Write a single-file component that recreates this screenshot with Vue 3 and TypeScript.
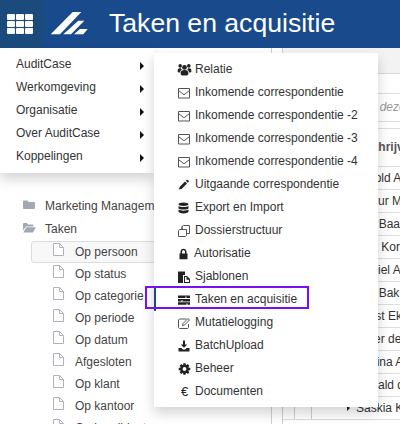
<script setup lang="ts">
interface Icon { fill?: string; stroke?: string; soft?: boolean }

const circle = (cx: number, cy: number, r: number): string =>
  `M${cx - r} ${cy}a${r} ${r} 0 1 0 ${2 * r} 0a${r} ${r} 0 1 0 ${-2 * r} 0Z`

function gear(): string {
  const pts: string[] = []
  const teeth = 8
  for (let i = 0; i < teeth; i++) {
    const a = (i / teeth) * Math.PI * 2
    for (const [off, r] of [[-0.3, 4.4], [-0.2, 5.9], [0.2, 5.9], [0.3, 4.4]] as const) {
      const t = a + off
      pts.push(`${(7.5 + Math.cos(t) * r).toFixed(2)} ${(7 + Math.sin(t) * r).toFixed(2)}`)
    }
  }
  return `M${pts.join('L')}Z${circle(7.5, 7, 1.9)}`
}

const envelope: Icon = { stroke: 'M1.5 2.5h11v9.5h-11zM1.5 4.5L7 8.8L12.5 4.5', soft: true }

const mainItems = ['AuditCase', 'Werkomgeving', 'Organisatie', 'Over AuditCase', 'Koppelingen']

const subItems: { label: string; icon: Icon; euro?: boolean; active?: boolean; tight?: boolean }[] = [
  { label: 'Relatie', icon: { fill: `${circle(7.5, 4.4, 2.4)}${circle(3.2, 2.9, 1.8)}${circle(11.8, 2.9, 1.8)}M3.6 10.6C3.6 8 4.8 7 7.5 7S11.4 8 11.4 10.6C11.4 11.8 10.6 12.6 9.6 12.6H5.4C4.4 12.6 3.6 11.8 3.6 10.6ZM.6 8C.6 5.6 1.6 5 3.8 5.2C4 5.9 4.4 6.4 4.9 6.7C3.8 7.3 3.1 8.2 3 9.4H1.6C1 9.4.6 8.8.6 8ZM14.4 8C14.4 5.6 13.4 5 11.2 5.2C11 5.9 10.6 6.4 10.1 6.7C11.2 7.3 11.9 8.2 12 9.4H13.4C14 9.4 14.4 8.8 14.4 8Z` } },
  { label: 'Inkomende correspondentie', icon: envelope },
  { label: 'Inkomende correspondentie -2', icon: envelope },
  { label: 'Inkomende correspondentie -3', icon: envelope },
  { label: 'Inkomende correspondentie -4', icon: envelope },
  { label: 'Uitgaande correspondentie', icon: { fill: 'M2 11.5L2.6 9L8 3.6L10 5.6L4.6 11ZM8.8 2.8L9.6 2C10 1.6 10.4 1.6 10.8 2L11.6 2.8C12 3.2 12 3.6 11.6 4L10.8 4.8Z' } },
  { label: 'Export en Import', icon: { fill: 'M6.5 1.5C9.3 1.5 11.5 2.2 11.5 3.3S9.3 5 6.5 5S1.5 4.4 1.5 3.3S3.7 1.5 6.5 1.5ZM1.5 5C2.5 5.8 4.5 6.1 6.5 6.1S10.5 5.8 11.5 5V6.9C11.5 8 9.3 8.6 6.5 8.6S1.5 8 1.5 6.9ZM1.5 8.6C2.5 9.4 4.5 9.7 6.5 9.7S10.5 9.4 11.5 8.6V10.6C11.5 11.7 9.3 12.4 6.5 12.4S1.5 11.7 1.5 10.6Z' } },
  { label: 'Dossierstructuur', icon: { stroke: 'M5 5.5V2.5L6.5 1.5H12.5V9.5H9.5M5 5.5H2.5L1.5 7V12.5H8.5L9.5 11.5V5.5H5ZM5 2.5V5.5', soft: true } },
  { label: 'Autorisatie', tight: true, icon: { fill: 'M2.5 6.5H3.5V4.8C3.5 2.9 4.8 1.8 6.5 1.8S9.5 2.9 9.5 4.8V6.5H10.5V12.2H2.5ZM5 6.5H8V4.8C8 3.8 7.4 3.2 6.5 3.2S5 3.8 5 4.8Z' } },
  { label: 'Sjablonen', icon: { fill: 'M1 1.5H8V5H6V13H1ZM7 6H10L13 9V13H7ZM8 7V12H12V9.8H9.5V7Z' } },
  { label: 'Taken en acquisitie', active: true, icon: { fill: 'M1 2.5H13V5H9.5V3.6H8.5V5H1ZM1 5.9H13V8.4H5.5V7H4.5V8.4H1ZM1 9.3H13V11.8H10.5V10.4H9.5V11.8H1Z' } },
  { label: 'Mutatielogging', icon: { stroke: 'M9.5 3H2.5L1.5 4V11.5L2.5 12.5H10.5L11.5 11.5V8M5.5 9.5L6 7.5L11 2.5L12.5 4L7.5 9Z', soft: true } },
  { label: 'BatchUpload', icon: { fill: 'M6 1.5H8V5.5H10.2L7 8.8L3.8 5.5H6ZM1.5 9H4.4L5.8 10.4H8.2L9.6 9H12.5V12.5H1.5Z' } },
  { label: 'Beheer', icon: { fill: gear() } },
  { label: 'Documenten', icon: {}, euro: true },
]

const subTree = ['Op persoon', 'Op status', 'Op categorie', 'Op periode', 'Op datum', 'Afgesloten', 'Op klant', 'Op kantoor', 'Op kandidaat']

const people = ['Arnold A', 'Arthur M', 'Jan Baan', 'Bert Kor', 'Daniel A', 'Jan Bak', 'Joost Ek', 'Peter de', 'Marina A', 'Ronald d', 'Saskia K']
</script>

<template>
  <div class="page">
    <header class="topbar">
      <div class="apps">
        <div class="apps-grid"><i v-for="n in 9" :key="n" /></div>
      </div>
      <svg class="logo" width="40" height="24" viewBox="0 0 40 24">
        <path d="M.7 22.3L22.7 0H31.3L10 22.3ZM13.3 22.3L28.3 8.7H34.3L21 22.3ZM24 22.3L30 17H37.7L33.3 22.3Z" fill="#fff" />
      </svg>
      <h1 class="title">Taken en acquisitie</h1>
    </header>

    <main class="workspace">
      <section class="tree-panel">
        <div class="tree">
          <div class="tree-root">
            <svg width="13" height="12" viewBox="0 0 13 12"><path d="M0 2.5C0 2 .5 1.5 1 1.5H4.5L5.5 3H11C11.6 3 12 3.4 12 4V9C12 9.6 11.6 10 11 10H1C.5 10 0 9.6 0 9Z" fill="#a4a8b0" /></svg>
            <span>Marketing Management</span>
          </div>
          <div class="tree-root">
            <svg width="13" height="12" viewBox="0 0 13 12"><path d="M0 2C0 1.5.5 1 1 1H4L5 2.4H9.5C10 2.4 10.4 2.8 10.4 3.4V4.4H3L0 8.5ZM3.4 5.2H13L10 10.4H.3Z" fill="#a4a8b0" /></svg>
            <span>Taken</span>
          </div>
          <div v-for="(t, i) in subTree" :key="t" class="tree-leaf" :class="{ selected: i === 0 }">
            <svg width="11" height="13" viewBox="0 0 11 13"><path d="M.5.5H6.5L10.5 4.5V12.5H.5ZM6.5.5V4.5H10.5" fill="#fff" stroke="#b0b4ba" /></svg>
            <span>{{ t }}</span>
          </div>
        </div>
        <div class="rail" />
      </section>

      <section class="content">
        <div class="toolbar" />
        <div class="spacer" />
        <div class="search">Zoek in deze lijst</div>
        <div class="gap-row" />
        <div class="table-head"><span>Omschrijving</span></div>
        <div v-for="p in people" :key="p" class="row">
          <div class="cell c1" />
          <div class="cell c2" />
          <div class="cell c3"><i class="caret" /><span>{{ p }}</span></div>
        </div>
      </section>
    </main>

    <nav class="menu main-menu">
      <a v-for="m in mainItems" :key="m" class="main-item">
        <span>{{ m }}</span><i class="arrow" />
      </a>
    </nav>

    <nav class="menu sub-menu">
      <a v-for="s in subItems" :key="s.label" class="sub-item" :class="{ active: s.active, tight: s.tight }">
        <span v-if="s.euro" class="euro">€</span>
        <svg v-else class="ico" width="15" height="14" viewBox="0 0 15 14">
          <path v-if="s.icon.fill" :d="s.icon.fill" fill="#222" fill-rule="evenodd" />
          <path v-if="s.icon.stroke" :d="s.icon.stroke" fill="none" :stroke="s.icon.soft ? '#555' : '#222'" stroke-width="1" stroke-linejoin="round" />
        </svg>
        <span>{{ s.label }}</span>
        <b v-if="s.active" class="callout" />
      </a>
    </nav>
  </div>
</template>

<style>
html, body { margin: 0; padding: 0; background: #fff; }
</style>

<style scoped>
.page {
  position: relative;
  width: 400px;
  height: 424px;
  overflow: hidden;
  background: #fff;
  font: 12px/1.2 "Liberation Sans", Arial, sans-serif;
  color: #333;
}
.topbar {
  display: flex;
  align-items: center;
  height: 48px;
  background: #194a8c;
  color: #fff;
}
.apps {
  display: flex;
  align-items: center;
  justify-content: center;
  width: 44px;
  height: 48px;
  background: #1b4b7d;
}
.apps-grid {
  display: grid;
  grid-template-columns: repeat(3, 8px);
  grid-auto-rows: 6px;
  gap: 1px;
  margin-left: -4px;
}
.apps-grid i { background: #fff; border-radius: 1px; }
.logo { margin-left: 6px; flex: none; }
.title {
  margin: 0 0 1px 19px;
  font-size: 26.6px;
  font-weight: 400;
  line-height: 1;
  white-space: nowrap;
}
.workspace {
  display: flex;
  height: 376px;
}
.tree-panel {
  display: flex;
  flex: none;
  width: 283px;
  box-sizing: border-box;
  border-right: 1px solid #cfcfcf;
}
.tree {
  flex: none;
  width: 272px;
  height: 376px;
  box-sizing: border-box;
  padding-top: 147px;
  overflow: hidden;
  border-right: 1px solid #cfcfcf;
  color: #444;
}
.rail { flex: 1; }
.tree-root {
  display: flex;
  align-items: flex-start;
  height: 23px;
  margin-left: 23px;
  gap: 9px;
  line-height: 23px;
  white-space: nowrap;
}
.tree-root svg { margin-top: 4px; flex: none; }
.tree-leaf {
  display: flex;
  align-items: flex-start;
  height: 22px;
  box-sizing: border-box;
  margin-left: 31px;
  padding-left: 21px;
  gap: 11px;
  line-height: 22px;
  white-space: nowrap;
  border: 1px solid transparent;
  border-radius: 3px;
}
.tree-leaf svg { margin-top: 1px; flex: none; }
.tree-leaf span { margin-top: -1px; }
.tree-leaf.selected {
  background: #f8f8f8;
  border-color: #ddd;
  width: 180px;
}
.content {
  flex: 1;
  min-width: 0;
  overflow: hidden;
}
.toolbar {
  height: 26px;
  box-sizing: border-box;
  background: #f3f3f3;
  border-bottom: 1px solid #d8d8d8;
}
.spacer { height: 19px; }
.search {
  height: 29px;
  box-sizing: border-box;
  padding-left: 54px;
  border-top: 1px solid #ddd;
  border-bottom: 1px solid #ddd;
  font-style: italic;
  line-height: 27px;
  color: #999;
  white-space: nowrap;
}
.gap-row { height: 6px; }
.table-head {
  height: 39px;
  box-sizing: border-box;
  padding-left: 62px;
  border-top: 1px solid #ddd;
  border-bottom: 1px solid #ddd;
  font-weight: 700;
  line-height: 37px;
  color: #555;
  white-space: nowrap;
}
.row {
  display: flex;
  height: 23px;
  box-sizing: border-box;
  border-bottom: 1px solid #ddd;
}
.cell { box-sizing: border-box; flex: none; }
.c1 { width: 12px; border-right: 1px solid #cfcfcf; }
.c2 { width: 17px; border-right: 1px solid #cfcfcf; }
.c3 {
  display: flex;
  align-items: center;
  gap: 6px;
  padding-left: 35px;
  white-space: nowrap;
  line-height: 22px;
}
.caret {
  flex: none;
  width: 0;
  height: 0;
  border-left: 3px solid #222;
  border-top: 3px solid transparent;
  border-bottom: 3px solid transparent;
}
.menu {
  position: absolute;
  background: #fff;
  box-shadow: 0 6px 12px rgba(0, 0, 0, .175);
}
.main-menu {
  left: 0;
  top: 48px;
  width: 154px;
  height: 125px;
  box-sizing: border-box;
  padding-top: 5px;
}
.main-item {
  position: relative;
  display: block;
  height: 23px;
  padding-left: 16px;
  line-height: 23px;
}
.arrow {
  position: absolute;
  left: 140px;
  top: 9px;
  width: 0;
  height: 0;
  border-left: 4px solid #111;
  border-top: 4px solid transparent;
  border-bottom: 4px solid transparent;
}
.sub-menu {
  left: 154px;
  top: 53px;
  width: 224px;
  height: 354px;
  box-sizing: border-box;
  padding-top: 5px;
}
.sub-item {
  position: relative;
  display: flex;
  align-items: center;
  height: 23px;
  box-sizing: border-box;
  padding: 0 0 0 23px;
  gap: 3px;
  line-height: 23px;
  white-space: nowrap;
}
.sub-item.tight { gap: 2px; }
.ico { flex: none; }
.euro {
  flex: none;
  width: 15px;
  text-align: center;
  font-size: 13px;
  font-weight: 400;
  color: #222;
}
.sub-item.active { box-shadow: inset 2px 0 0 #194a8c; }
.callout {
  position: absolute;
  left: -9px;
  top: -2px;
  width: 164px;
  height: 23px;
  box-sizing: border-box;
  border: 2px solid #7a10f0;
}
</style>
